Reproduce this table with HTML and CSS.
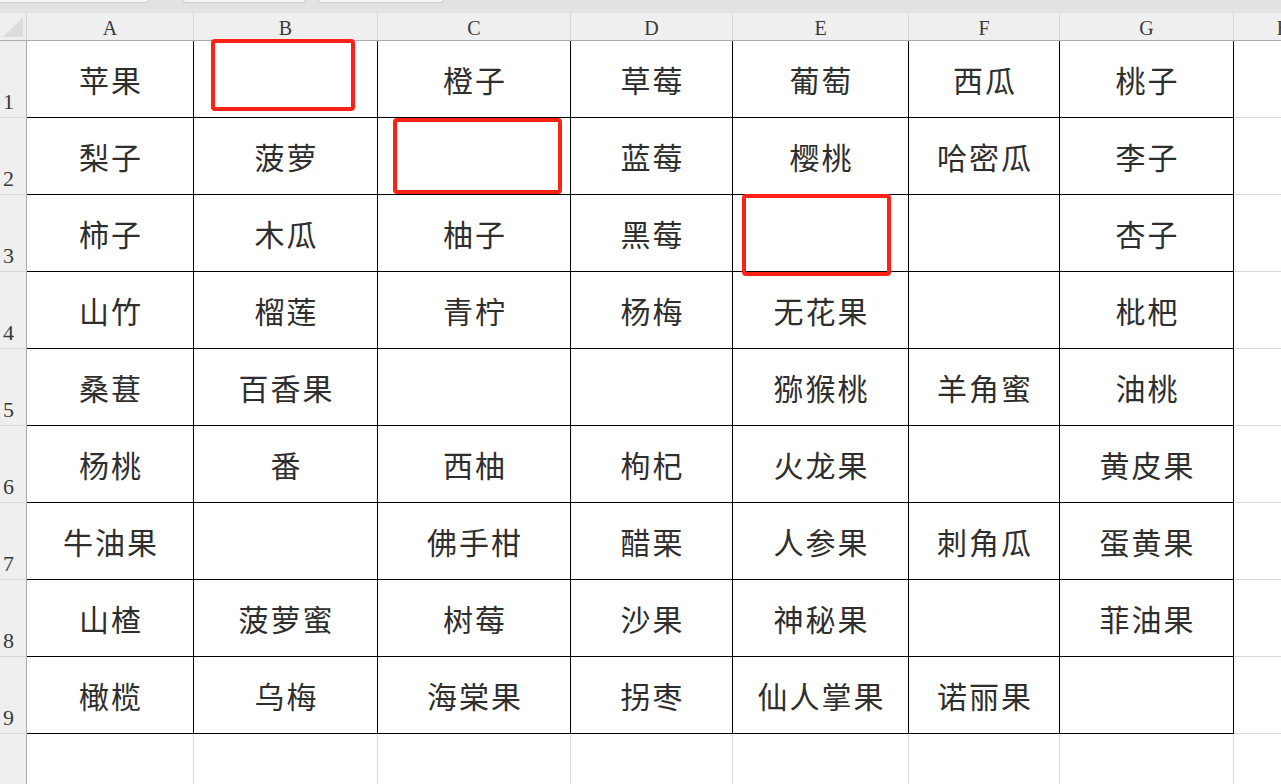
FILE: index.html
```html
<!DOCTYPE html>
<html lang="zh-CN">
<head>
<meta charset="utf-8">
<title>水果表</title>
<link rel="stylesheet" href="styles.css">
</head>
<body>
<div class="app">
  <div class="tabs">
    <div class="tab tab-1"></div>
    <div class="tab tab-2"></div>
    <div class="tab tab-3"></div>
  </div>
  <div class="sheet">
    <div class="corner"><span class="tri"></span></div>
    <div class="colh">A</div><div class="colh">B</div><div class="colh">C</div><div class="colh">D</div><div class="colh">E</div><div class="colh">F</div><div class="colh">G</div><div class="colh colh-h">H</div>

    <div class="rowh">1</div>
    <div class="c">苹果</div><div class="c"></div><div class="c">橙子</div><div class="c">草莓</div><div class="c">葡萄</div><div class="c">西瓜</div><div class="c">桃子</div><div class="x"></div>

    <div class="rowh">2</div>
    <div class="c">梨子</div><div class="c">菠萝</div><div class="c"></div><div class="c">蓝莓</div><div class="c">樱桃</div><div class="c">哈密瓜</div><div class="c">李子</div><div class="x"></div>

    <div class="rowh">3</div>
    <div class="c">柿子</div><div class="c">木瓜</div><div class="c">柚子</div><div class="c">黑莓</div><div class="c"></div><div class="c"></div><div class="c">杏子</div><div class="x"></div>

    <div class="rowh">4</div>
    <div class="c">山竹</div><div class="c">榴莲</div><div class="c">青柠</div><div class="c">杨梅</div><div class="c">无花果</div><div class="c"></div><div class="c">枇杷</div><div class="x"></div>

    <div class="rowh">5</div>
    <div class="c">桑葚</div><div class="c">百香果</div><div class="c"></div><div class="c"></div><div class="c">猕猴桃</div><div class="c">羊角蜜</div><div class="c">油桃</div><div class="x"></div>

    <div class="rowh">6</div>
    <div class="c">杨桃</div><div class="c">番</div><div class="c">西柚</div><div class="c">枸杞</div><div class="c">火龙果</div><div class="c"></div><div class="c">黄皮果</div><div class="x"></div>

    <div class="rowh">7</div>
    <div class="c">牛油果</div><div class="c"></div><div class="c">佛手柑</div><div class="c">醋栗</div><div class="c">人参果</div><div class="c">刺角瓜</div><div class="c">蛋黄果</div><div class="x"></div>

    <div class="rowh">8</div>
    <div class="c">山楂</div><div class="c">菠萝蜜</div><div class="c">树莓</div><div class="c">沙果</div><div class="c">神秘果</div><div class="c"></div><div class="c">菲油果</div><div class="x"></div>

    <div class="rowh">9</div>
    <div class="c">橄榄</div><div class="c">乌梅</div><div class="c">海棠果</div><div class="c">拐枣</div><div class="c">仙人掌果</div><div class="c">诺丽果</div><div class="c"></div><div class="x"></div>

    <div class="rowh rowh-last"></div>
    <div class="e"></div><div class="e"></div><div class="e"></div><div class="e"></div><div class="e"></div><div class="e"></div><div class="e"></div><div class="e e-last"></div>
  </div>

  <div class="mark mark-1"></div>
  <div class="mark mark-2"></div>
  <div class="mark mark-3"></div>
</div>
</body>
</html>
```

FILE: styles.css
```css
* {
  box-sizing: border-box;
}

html, body {
  margin: 0;
  padding: 0;
  background: #ffffff;
}

body {
  width: 1281px;
  height: 784px;
  overflow: hidden;
}

.app {
  position: relative;
  width: 1281px;
  height: 784px;
  overflow: hidden;
}

/* top strip with tab bottoms */
.tabs {
  height: 13px;
  background: #e2e2e2;
  display: flex;
  align-items: flex-start;
}

.tab {
  height: 3px;
  background: #f7f7f7;
  border: 1px solid #cdcdcd;
  border-top: none;
  border-radius: 0 0 6px 6px;
}

.tab-1 {
  width: 149px;
  border-left: none;
  border-radius: 0 0 6px 0;
}

.tab-2 {
  width: 123px;
  margin-left: 34px;
}

.tab-3 {
  width: 126px;
  margin-left: 12px;
}

/* spreadsheet grid */
.sheet {
  display: grid;
  grid-template-columns: 27px 167px 184px 193px 162px 176px 151px 174px 100px;
  grid-template-rows: 28px repeat(9, 77px) 50px;
  width: 1334px;
}

.corner {
  position: relative;
  background: #efefef;
  border-right: 1px solid #d4d4d4;
  border-bottom: 1px solid #ababab;
}

.tri {
  position: absolute;
  right: 3px;
  bottom: 3px;
  width: 0;
  height: 0;
  border-style: solid;
  border-width: 0 0 20px 20px;
  border-color: transparent transparent #dcdcdc transparent;
}

.colh {
  background: #efefef;
  border-right: 1px solid #d6d6d6;
  border-bottom: 1px solid #ababab;
  font-family: "Liberation Serif", "DejaVu Serif", serif;
  font-size: 20px;
  color: #3a3a3a;
  display: flex;
  align-items: flex-end;
  justify-content: center;
  padding-bottom: 2px;
  line-height: 1;
}

.colh-h {
  border-right: none;
}

.rowh {
  background: #efefef;
  border-right: 1px solid #ababab;
  border-bottom: 1px solid #d6d6d6;
  font-family: "Liberation Serif", "DejaVu Serif", serif;
  font-size: 22px;
  line-height: 1;
  color: #3a3a3a;
  display: flex;
  align-items: flex-end;
  padding: 0 0 4px 3px;
}

.rowh-last {
  border-bottom: none;
}

.c {
  border-right: 1px solid #000000;
  border-bottom: 1px solid #000000;
  display: flex;
  align-items: center;
  justify-content: center;
  font-family: "Noto Sans CJK SC", "Noto Sans", sans-serif;
  font-size: 30px;
  letter-spacing: 2px;
  padding-left: 2px;
  padding-bottom: 1px;
  color: #2e2e2e;
  white-space: nowrap;
}

.x {
  border-bottom: 1px solid #dadada;
}

.e {
  border-right: 1px solid #dadada;
}

.e-last {
  border-right: none;
}

/* red highlight boxes */
.mark {
  position: absolute;
  border: 4px solid #ff2116;
  border-radius: 4px;
}

.mark-1 {
  left: 211px;
  top: 39px;
  width: 144px;
  height: 72px;
}

.mark-2 {
  left: 393px;
  top: 118px;
  width: 169px;
  height: 76px;
}

.mark-3 {
  left: 742px;
  top: 194px;
  width: 149px;
  height: 82px;
}
```
